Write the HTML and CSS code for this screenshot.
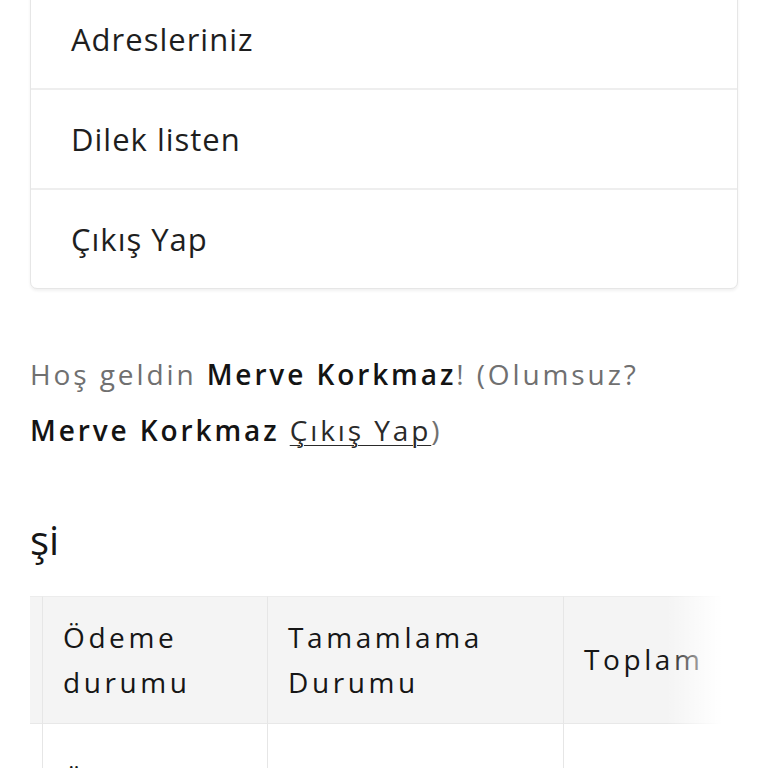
FILE: index.html
```html
<!DOCTYPE html>
<html lang="tr">
<head>
<meta charset="utf-8">
<title>Hesabım</title>
<link rel="stylesheet" href="styles.css">
</head>
<body>
<main class="page">
  <nav class="menu-card">
    <a class="menu-item" href="#">Adresleriniz</a>
    <a class="menu-item" href="#">Dilek listen</a>
    <a class="menu-item" href="#">Çıkış Yap</a>
  </nav>

  <p class="welcome">Hoş geldin <strong>Merve Korkmaz</strong>! (Olumsuz? <strong>Merve Korkmaz</strong> <a class="logout" href="#">Çıkış Yap</a>)</p>

  <h2 class="section-title">şi</h2>

  <div class="table-wrap">
    <table class="orders">
      <thead>
        <tr>
          <th class="c0"></th>
          <th class="c1">Ödeme durumu</th>
          <th class="c2">Tamamlama Durumu</th>
          <th class="c3 mid">Toplam</th>
        </tr>
      </thead>
      <tbody>
        <tr>
          <td class="c0"></td>
          <td class="c1">Ödendi</td>
          <td class="c2">onaylandı</td>
          <td class="c3"></td>
        </tr>
      </tbody>
    </table>
    <div class="fade"></div>
  </div>
</main>
</body>
</html>
```

FILE: styles.css
```css
html, body {
  margin: 0;
  padding: 0;
  background: #ffffff;
}

body {
  font-family: "Open Sans", "Noto Sans", "DejaVu Sans", sans-serif;
  color: #1c1c1c;
}

.page {
  padding: 0 30px;
  overflow: hidden;
  height: 768px;
}

/* account navigation card (scrolled so its first item is partly above) */
.menu-card {
  margin-top: -11px;
  border: 1px solid #e6e6e6;
  border-radius: 7px;
  box-shadow: 0 2px 3px rgba(0, 0, 0, 0.06);
  display: flex;
  flex-direction: column;
  background: #fff;
}

.menu-item {
  height: 98px;
  display: flex;
  align-items: center;
  padding-left: 40px;
  font-size: 31px;
  letter-spacing: 1px;
  color: #1e1e1e;
  text-decoration: none;
  border-bottom: 2px solid #eeeeee;
}

.menu-item:last-child {
  border-bottom: 0;
}

/* greeting */
.welcome {
  margin: 57px 0 0;
  max-width: 680px;
  font-size: 28px;
  line-height: 56px;
  letter-spacing: 2.9px;
  color: #707070;
}

.welcome strong {
  font-weight: 600;
  color: #141414;
}

.logout {
  color: #2a2a2a;
  text-decoration: underline;
  text-underline-offset: 4px;
  text-decoration-thickness: 1px;
}

.section-title {
  margin: 58px 0 32px;
  font-size: 40px;
  line-height: 48px;
  font-weight: 500;
  color: #161616;
}

/* orders table */
.table-wrap {
  position: relative;
  overflow: hidden;
}

.orders {
  table-layout: fixed;
  width: 833px;
  border-collapse: separate;
  border-spacing: 0;
}

.orders th,
.orders td {
  text-align: left;
  vertical-align: top;
  font-size: 28px;
  line-height: 44.8px;
  letter-spacing: 3.6px;
  color: #161616;
  border-left: 1px solid #e6e6e6;
}

.orders th {
  background: #f4f4f4;
  font-weight: 500;
  padding: 18px 20px;
  border-top: 1px solid #ececec;
  border-bottom: 1px solid #e8e8e8;
}

.orders th.mid {
  vertical-align: middle;
}

.orders td {
  padding: 34px 20px 20px;
  font-weight: 400;
}

.orders .c0 {
  width: 12px;
  padding: 0;
  border-left: 0;
}

.orders .c1 { width: 184px; }
.orders .c2 { width: 255px; }
.orders .c3 { width: 259px; }

.fade {
  position: absolute;
  top: 0;
  right: 0;
  bottom: 0;
  width: 72px;
  background: linear-gradient(to right, rgba(255, 255, 255, 0), #ffffff 78%);
}
```
